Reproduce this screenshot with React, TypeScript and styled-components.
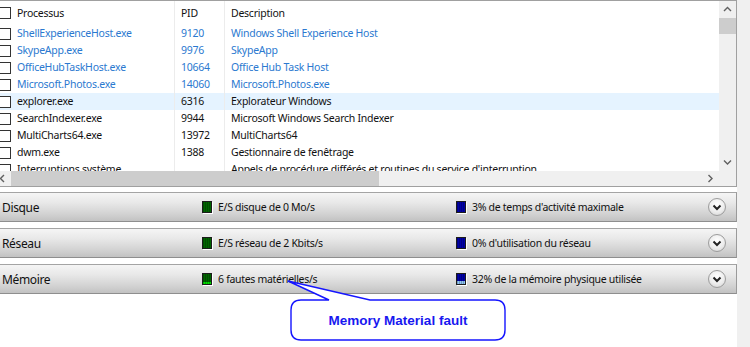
import React from 'react'
import styled, { createGlobalStyle } from 'styled-components'

const GlobalStyle = createGlobalStyle`
  html, body {
    margin: 0;
    padding: 0;
    background: #f0f0f0;
  }
  body {
    font-family: "Noto Sans", "Open Sans", sans-serif;
    color: #000;
  }
`

const Page = styled.div`
  position: relative;
  width: 750px;
  height: 347px;
  overflow: hidden;
  background: #f0f0f0;
`

const Panel = styled.div`
  width: 737px;
  height: 347px;
  background: #fff;
  display: flex;
  flex-direction: column;
`

const ProcessFrame = styled.div`
  border-top: 1px solid #a0a0a0;
  border-right: 1px solid #a0a0a0;
  border-bottom: 1px solid #a0a0a0;
  display: grid;
  grid-template-columns: 719px 17px;
  grid-template-rows: 170px 15px;
`

const List = styled.div`
  overflow: hidden;
  background: #fff;
`

const Row = styled.div<{ $header?: boolean; $hover?: boolean }>`
  display: grid;
  grid-template-columns: 175px 50px 1fr;
  height: ${({ $header }) => ($header ? '24px' : '17px')};
  background: ${({ $hover }) => ($hover ? '#e5f3ff' : 'transparent')};
  font-size: 10.5px;
  letter-spacing: -0.25px;
  line-height: 17px;
`

const Cell = styled.div<{ $link?: boolean; $last?: boolean }>`
  display: flex;
  align-items: center;
  padding-left: 6px;
  white-space: nowrap;
  overflow: hidden;
  color: ${({ $link }) => ($link ? '#2b79d0' : '#111')};
  border-right: ${({ $last }) => ($last ? 'none' : '1px solid #ececec')};
`

const NameCell = styled(Cell)`
  padding-left: 0;
`

const Check = styled.span`
  flex: none;
  box-sizing: border-box;
  width: 12px;
  height: 12px;
  margin-left: -1px;
  margin-right: 6px;
  border: 1px solid #333;
  background: #fff;
`

const VScroll = styled.div`
  background: #f0f0f0;
  display: flex;
  flex-direction: column;
  grid-row: 1;
  grid-column: 2;
`

const ArrowButton = styled.div<{ $w?: number; $h?: number; $shift?: number }>`
  flex: none;
  width: ${({ $w }) => $w ?? 17}px;
  height: ${({ $h }) => $h ?? 17}px;
  margin-left: ${({ $shift }) => $shift ?? 0}px;
  display: flex;
  align-items: center;
  justify-content: center;
`

const VThumb = styled.div`
  height: 16px;
  background: #cdcdcd;
`

const Spacer = styled.div`
  flex: 1;
`

const HScroll = styled.div`
  background: #f0f0f0;
  display: flex;
  align-items: center;
  overflow: hidden;
  grid-row: 2;
  grid-column: 1;
`

const HThumb = styled.div`
  width: 368px;
  height: 15px;
  background: #cdcdcd;
`

const Corner = styled.div`
  background: #f0f0f0;
  grid-row: 2;
  grid-column: 2;
`

const Sections = styled.div`
  display: flex;
  flex-direction: column;
  gap: 6px;
  padding-top: 5px;
`

const Bar = styled.div`
  box-sizing: border-box;
  height: 30px;
  border-top: 1px solid #a4a4a4;
  border-bottom: 1px solid #8e8e8e;
  border-right: 1px solid #9a9a9a;
  background: linear-gradient(#f5f5f5 0%, #e8e8e8 35%, #d2d2d2 75%, #c2c2c2 100%);
  display: grid;
  grid-template-columns: 202px 254px 1fr auto;
  align-items: center;
  padding-right: 10px;
`

const BarLabel = styled.div`
  padding-left: 2px;
  font-size: 12px;
  letter-spacing: -0.35px;
  color: #111;
`

const Metric = styled.div`
  display: flex;
  align-items: center;
  font-size: 10.5px;
  letter-spacing: -0.3px;
  color: #111;
  white-space: nowrap;
`

const Swatch = styled.span<{ $color: string; $fill: string; $level: number }>`
  flex: none;
  box-sizing: border-box;
  width: 10px;
  height: 12px;
  margin-right: 6px;
  border: 1px solid #1c1c1c;
  box-shadow: 1px 1px 0 #fff;
  background:
    repeating-linear-gradient(90deg, rgba(0, 0, 0, 0.22) 0 1px, transparent 1px 2px),
    linear-gradient(
      to top,
      ${({ $fill }) => $fill} 0 ${({ $level }) => $level}%,
      ${({ $color }) => $color} ${({ $level }) => $level}% 100%
    );
`

const Expand = styled.div`
  width: 18px;
  height: 18px;
  box-sizing: border-box;
  border-radius: 50%;
  border: 1px solid #9c9c9c;
  background: radial-gradient(circle at 50% 35%, #ffffff 0%, #ededed 55%, #d0d0d0 100%);
  display: flex;
  align-items: center;
  justify-content: center;
`

const Callout = styled.svg`
  position: absolute;
  left: 0;
  top: 0;
  pointer-events: none;
`

type Proc = { name: string; pid: string; desc: string; link?: boolean; hover?: boolean }

const procs: Proc[] = [
  { name: 'ShellExperienceHost.exe', pid: '9120', desc: 'Windows Shell Experience Host', link: true },
  { name: 'SkypeApp.exe', pid: '9976', desc: 'SkypeApp', link: true },
  { name: 'OfficeHubTaskHost.exe', pid: '10664', desc: 'Office Hub Task Host', link: true },
  { name: 'Microsoft.Photos.exe', pid: '14060', desc: 'Microsoft.Photos.exe', link: true },
  { name: 'explorer.exe', pid: '6316', desc: 'Explorateur Windows', hover: true },
  { name: 'SearchIndexer.exe', pid: '9944', desc: 'Microsoft Windows Search Indexer' },
  { name: 'MultiCharts64.exe', pid: '13972', desc: 'MultiCharts64' },
  { name: 'dwm.exe', pid: '1388', desc: 'Gestionnaire de fenêtrage' },
  { name: 'Interruptions système', pid: '', desc: "Appels de procédure différés et routines du service d'interruption" },
]

type Section = {
  label: string
  left: string
  right: string
  leftLevel: number
  rightLevel: number
}

const sections: Section[] = [
  { label: 'Disque', left: 'E/S disque de 0 Mo/s', right: "3% de temps d'activité maximale", leftLevel: 0, rightLevel: 0 },
  { label: 'Réseau', left: 'E/S réseau de 2 Kbits/s', right: "0% d'utilisation du réseau", leftLevel: 0, rightLevel: 0 },
  { label: 'Mémoire', left: '6 fautes matérielles/s', right: '32% de la mémoire physique utilisée', leftLevel: 18, rightLevel: 32 },
]

const Chevron = ({ dir }: { dir: 'up' | 'down' | 'left' | 'right' }) => {
  const d = {
    up: 'M1 5 L4.5 1.5 L8 5',
    down: 'M1 1.5 L4.5 5 L8 1.5',
    left: 'M5 1 L1.5 4.5 L5 8',
    right: 'M1.5 1 L5 4.5 L1.5 8',
  }[dir]
  const vertical = dir === 'up' || dir === 'down'
  return (
    <svg width={vertical ? 9 : 7} height={vertical ? 7 : 9} viewBox={vertical ? '0 0 9 7' : '0 0 7 9'}>
      <path d={d} fill="none" stroke="#606060" strokeWidth="1.4" />
    </svg>
  )
}

export default function App() {
  return (
    <Page>
      <GlobalStyle />
      <Panel>
        <ProcessFrame>
          <List>
            <Row $header>
              <NameCell>
                <Check />
                Processus
              </NameCell>
              <Cell>PID</Cell>
              <Cell $last>Description</Cell>
            </Row>
            {procs.map((p) => (
              <Row key={p.name} $hover={p.hover}>
                <NameCell $link={p.link}>
                  <Check />
                  {p.name}
                </NameCell>
                <Cell $link={p.link}>{p.pid}</Cell>
                <Cell $link={p.link} $last>
                  {p.desc}
                </Cell>
              </Row>
            ))}
          </List>
          <VScroll>
            <ArrowButton>
              <Chevron dir="up" />
            </ArrowButton>
            <VThumb />
            <Spacer />
            <ArrowButton>
              <Chevron dir="down" />
            </ArrowButton>
          </VScroll>
          <HScroll>
            <ArrowButton $h={15} $shift={-6}>
              <Chevron dir="left" />
            </ArrowButton>
            <HThumb />
            <Spacer />
            <ArrowButton $h={15}>
              <Chevron dir="right" />
            </ArrowButton>
          </HScroll>
          <Corner />
        </ProcessFrame>
        <Sections>
          {sections.map((s) => (
            <Bar key={s.label}>
              <BarLabel>{s.label}</BarLabel>
              <Metric>
                <Swatch $color="#006400" $fill="#00e000" $level={s.leftLevel} />
                {s.left}
              </Metric>
              <Metric>
                <Swatch $color="#0000a8" $fill="#8ec4f4" $level={s.rightLevel} />
                {s.right}
              </Metric>
              <Expand>
                <svg width="10" height="7" viewBox="0 0 10 7">
                  <path d="M1.5 1.5 L5 5 L8.5 1.5" fill="none" stroke="#222" strokeWidth="2" />
                </svg>
              </Expand>
            </Bar>
          ))}
        </Sections>
      </Panel>
      <Callout width="750" height="347" viewBox="0 0 750 347">
        <path
          d="M301 300 L329 300 L288 281 L370 300 L495 300 Q505 300 505 310 L505 330 Q505 340 495 340 L301 340 Q291 340 291 330 L291 310 Q291 300 301 300 Z"
          fill="#fff"
          stroke="#1515ff"
          strokeWidth="1.4"
        />
        <text
          x="398"
          y="325"
          textAnchor="middle"
          fontFamily='"Liberation Sans", Arial, sans-serif'
          fontWeight="bold"
          fontSize="13.5"
          fill="#1818f0"
        >
          Memory Material fault
        </text>
      </Callout>
    </Page>
  )
}
